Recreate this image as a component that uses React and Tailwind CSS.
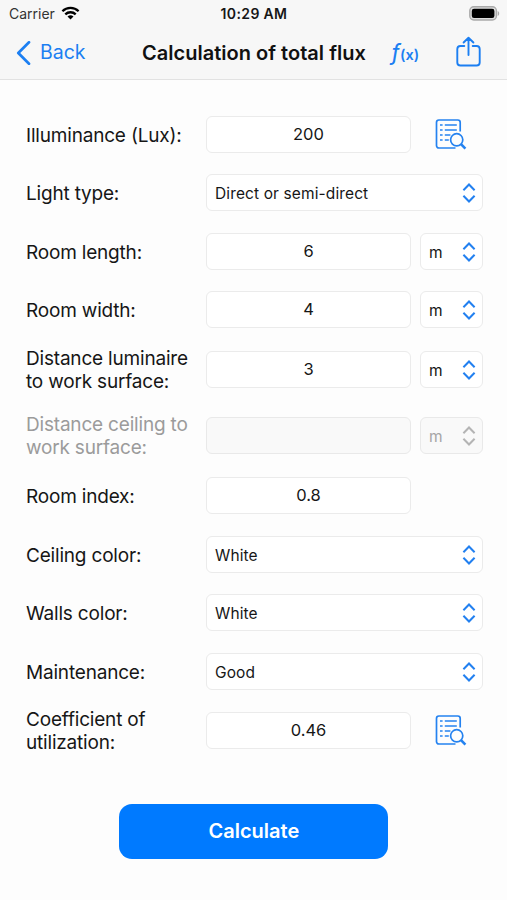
import React from "react";

const boxBase = "h-[37px] rounded-[6px] border flex items-center text-[16.5px]";

function Chevrons({ disabled }) {
  return (
    <svg width="14" height="20" viewBox="0 0 14 20" fill="none" stroke={disabled ? "#b4b4b4" : "#2280f0"} strokeWidth="2" className="shrink-0">
      <path d="M1.4 7.3 7 1.5l5.6 5.8M1.4 12.7 7 18.5l5.6-5.8" />
    </svg>
  );
}

function LookupIcon() {
  return (
    <svg width="32" height="32" viewBox="0 0 32 32" fill="none" stroke="#2482f0" className="-mt-px ml-[24px] shrink-0">
      <path d="M25.2 13.5V4.4a2.4 2.4 0 0 0-2.4-2.4H3.9a2.4 2.4 0 0 0-2.4 2.4v23.2A2.4 2.4 0 0 0 3.9 30H20.5" strokeWidth="1.7" />
      <path d="M5 7h2.6M5 12h2.6M5 17h2.6M5 22h2.6M9.8 7h12M9.8 12h12M9.8 17h5.6M9.8 22h4" strokeWidth="1.7" />
      <circle cx="21.7" cy="21.8" r="6.1" strokeWidth="1.7" />
      <path d="m26 26.2 4.4 4.5" strokeWidth="2.6" />
    </svg>
  );
}

function Field({ value, disabled }) {
  return (
    <div className={`${boxBase} w-[205px] justify-center ${disabled ? "border-[#e9e9e9] bg-[#f9f9f9]" : "border-[#ebebeb] bg-white"}`}>
      {value}
    </div>
  );
}

function Select({ value }) {
  return (
    <div className={`${boxBase} w-[277px] justify-between border-[#ebebeb] bg-white pl-2 pr-[6px]`}>
      <span className="pt-[2px] text-[15.5px] tracking-[0.12px]">{value}</span>
      <Chevrons />
    </div>
  );
}

function Unit({ disabled }) {
  return (
    <div className={`${boxBase} ml-[9px] w-[63px] justify-between pl-2 pr-[6px] ${disabled ? "border-[#e9e9e9] bg-[#f9f9f9] text-[#a6a6a6]" : "border-[#ebebeb] bg-white"}`}>
      <span className="pt-[2px] text-[15.5px]">m</span>
      <Chevrons disabled={disabled} />
    </div>
  );
}

function Row({ label, gap = "", disabled, children }) {
  return (
    <div className={`flex h-[37px] items-center ${gap}`}>
      <div className={`w-[180px] shrink-0 whitespace-pre pt-px text-[19px] leading-[23px] tracking-[-0.19px] ${disabled ? "text-[#9b9b9b]" : ""}`}>{label}</div>
      {children}
    </div>
  );
}

export default function App() {
  return (
    <div className="flex h-[900px] w-[507px] flex-col overflow-hidden bg-[#fdfdfd] font-['Inter','Liberation_Sans',sans-serif] text-[#161616]">
      <header className="h-[80px] shrink-0 border-b border-[#e2e2e2] bg-[#f7f7f7]">
        <div className="grid h-[27px] grid-cols-[1fr_auto_1fr] items-center pl-[8px] pr-[7px] text-[14px]">
          <div className="flex items-center gap-[6px]">
            <span className="pl-px text-[#333]">Carrier</span>
            <svg width="19" height="14" viewBox="0 0 18 14" fill="none" stroke="#000" strokeWidth="2.3" className="-mt-px">
              <path d="M.9 5.3a11.5 11.5 0 0 1 16.2 0M3.8 8.4a7.4 7.4 0 0 1 10.4 0" />
              <path d="M9 13.6 6 10.6a4.3 4.3 0 0 1 6 0Z" fill="#000" stroke="none" />
            </svg>
          </div>
          <span className="font-semibold tracking-[0.36px]">10:29 AM</span>
          <svg width="31" height="15" viewBox="0 0 31 15" className="justify-self-end">
            <rect x=".8" y=".8" width="26.6" height="13.2" rx="4" fill="#dedede" stroke="#aaa" strokeWidth="1.4" />
            <rect x="2.8" y="2.8" width="22.6" height="9.2" rx="2.2" fill="#000" />
            <path d="M28.7 5v5c2-.8 2-4.2 0-5Z" fill="#aaa" />
          </svg>
        </div>
        <div className="flex h-[51px] items-center pl-[16px] text-[#1c7ff2]">
          <svg width="15" height="24" viewBox="0 0 15 24" fill="none" stroke="currentColor" strokeWidth="2.7" strokeLinecap="round" strokeLinejoin="round">
            <path d="M13 1.3 2.3 12 13 22.7" />
          </svg>
          <span className="ml-[9px] w-[102px] pt-px text-[19.5px]">Back</span>
          <h1 className="w-[249px] whitespace-nowrap text-[20px] font-semibold tracking-[0.02px] text-[#111]">Calculation of total flux</h1>
          <div className="flex w-[65px] items-baseline pt-px">
            <span className="text-[23px] italic leading-none">ƒ</span>
            <span className="text-[14.5px] font-semibold">(x)</span>
          </div>
          <svg width="26" height="32" viewBox="0 0 26 32" fill="none" stroke="currentColor" strokeWidth="1.9" strokeLinecap="round" strokeLinejoin="round" className="-mt-px">
            <path d="M8.3 10H4.4A3.1 3.1 0 0 0 1.3 13v13.4a3.1 3.1 0 0 0 3.1 3.1h16.2a3.1 3.1 0 0 0 3.1-3.1V13a3.1 3.1 0 0 0-3.1-3h-3.9M12.5 19V1.8M7.6 6.5l4.9-4.8 4.9 4.8" />
          </svg>
        </div>
      </header>

      <main className="flex flex-col pl-[26px] pt-[36px]">
        <Row label="Illuminance (Lux):">
          <Field value="200" />
          <LookupIcon />
        </Row>
        <Row label="Light type:" gap="mt-[21px]"><Select value="Direct or semi-direct" /></Row>
        <Row label="Room length:" gap="mt-[22px]"><Field value="6" /><Unit /></Row>
        <Row label="Room width:" gap="mt-[21px]"><Field value="4" /><Unit /></Row>
        <Row label={"Distance luminaire\nto work surface:"} gap="mt-[23px]"><Field value="3" /><Unit /></Row>
        <Row label={"Distance ceiling to\nwork surface:"} gap="mt-[29px]" disabled><Field value="" disabled /><Unit disabled /></Row>
        <Row label="Room index:" gap="mt-[23px]"><Field value="0.8" /></Row>
        <Row label="Ceiling color:" gap="mt-[22px]"><Select value="White" /></Row>
        <Row label="Walls color:" gap="mt-[21px]"><Select value="White" /></Row>
        <Row label="Maintenance:" gap="mt-[22px]"><Select value="Good" /></Row>
        <Row label={"Coefficient of\nutilization:"} gap="mt-[22px]">
          <Field value="0.46" />
          <LookupIcon />
        </Row>
      </main>

      <button className="ml-[119.4px] mt-[54.5px] h-[55px] w-[269px] rounded-[13px] bg-[#007aff] text-[20px] font-semibold text-white">Calculate</button>
    </div>
  );
}
